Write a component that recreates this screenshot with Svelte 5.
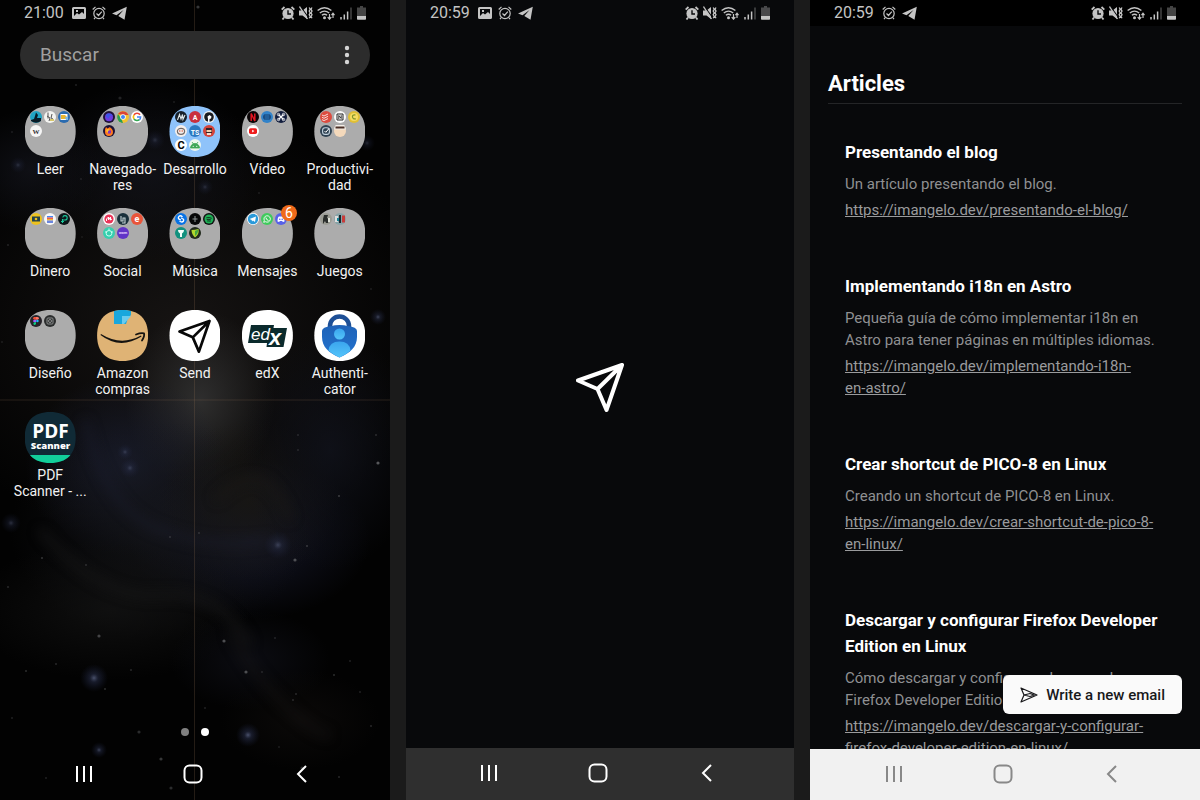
<script>
  const dot = (fill, art = '') => `<circle cx="6" cy="6" r="6" fill="${fill}"/>${art}`;
  const letter = (t, fill, size = 8, y = 9, extra = '') =>
    `<text x="6" y="${y}" font-size="${size}" font-weight="700" text-anchor="middle" fill="${fill}" ${extra}>${t}</text>`;

  const art = {
    kindle: dot('#20a5c4', '<path d="M6 1.500 8 4 7 7h4v3q-5 3.500-10 0V9l3-1 1-3z" fill="#091b26"/>'),
    sketch: dot('#f4f4f1', '<path d="M4 1.500v6M3 5l3 2-1 3M8 3l-1 4 2 1" stroke="#555" fill="none"/><path d="M6 8h4v2H6z" fill="#d8c76c"/>'),
    files: dot('#2a6bb0', '<path d="M2.500 3h7v6h-7z" fill="#fff"/><path d="M3 4h4l2 2v2H3z" fill="#e8b530"/><path d="M7 6h3v3H8z" fill="#79b6e8"/>'),
    wiki: dot('#f6f6f6', letter('W', '#333', 7, 8.5, 'font-family="Liberation Serif"')),
    foxNight: dot('#20123a', '<circle cx="6" cy="6.300" r="4" fill="#6e3be0"/><path d="M3 4c2-2 5-2 7 1-2-1-4 0-4 2 0 1-3 0-3-3z" fill="#3c55e8"/>'),
    chrome: dot('#f2c230', '<path d="M1 3A6 6 0 0 1 11.500 4H6z" fill="#db4437"/><path d="M1 3 4.500 8 6 12A6 6 0 0 1 1 3z" fill="#249d58"/><circle cx="6" cy="6" r="2.800" fill="#fff"/><circle cx="6" cy="6" r="2" fill="#4285f4"/>'),
    google: dot('#fff', '<path d="M9 3.800A3.600 3.600 0 0 0 3 4" stroke="#ea4335" stroke-width="1.600" fill="none"/><path d="M3 4a3.600 3.600 0 0 0 0 4" stroke="#fbbc05" stroke-width="1.600" fill="none"/><path d="M3 8a3.600 3.600 0 0 0 5.500.500" stroke="#34a853" stroke-width="1.600" fill="none"/><path d="M6 6h3.600q0 2-1.200 2.800" stroke="#4285f4" stroke-width="1.500" fill="none"/>'),
    firefox: dot('#1d1237', '<path d="M2 5c0-2 1-2 1-3l1.500 1.500L7 2c0 1 3 1.500 3 5a4 4 0 0 1-8 0z" fill="#ff7a20"/><circle cx="6.200" cy="6.800" r="2" fill="#8a35b8"/><path d="M3 5q2-2 4 0L5 6v2q-2-1-2-3z" fill="#ffc22e"/>'),
    mono: dot('#16202a', '<path d="M2.500 9 4.500 3.500 6 8l1.500-4.500L8 8.500 10 4" stroke="#dfe7ea" stroke-width="1.100" fill="none"/>'),
    angular: dot('#c9303e', letter('A', '#fff', 7, 8.5)),
    github: dot('#f1f2f2', '<circle cx="6" cy="6" r="4.800" fill="#181b20"/><path d="M4.500 5.500 6.500 4l2 1.500L8 7.500 6.500 8v3H5V8z" fill="#fff"/>'),
    bot: dot('#f3efed', '<ellipse cx="6" cy="6.300" rx="3.600" ry="3" fill="none" stroke="#736a68" stroke-width="1.200"/><circle cx="4.800" cy="6" r=".7" fill="#e44a2a"/><circle cx="7.200" cy="6" r=".7" fill="#e44a2a"/>'),
    ts: dot('#2b79c2', letter('TS', '#fff', 7, 9.5)),
    ninja: dot('#d3443b', '<path d="M3 3h6v5H3z" fill="#33242a"/><path d="M3.500 5h5v2h-5z" fill="#f5cda8"/><path d="M4 8h4v2H4z" fill="#f2dfcf"/>'),
    cee: dot('#fff', letter('C', '#050505', 11, 10)),
    android: dot('#eef8ed', '<path d="M1.500 9a4.500 4.500 0 0 1 9 0zM3 3l1.500 2M9 3 7.500 5" fill="#40a856" stroke="#40a856" stroke-width=".8"/><circle cx="4.200" cy="7.300" r=".6" fill="#fff"/><circle cx="7.800" cy="7.300" r=".6" fill="#fff"/>'),
    netflix: dot('#090506', '<path d="M4.200 10V2.500L7.800 10V2.500" stroke="#e31621" stroke-width="1.500" fill="none"/>'),
    play: dot('#3182c9', '<path d="M3 4h6v4H3zM2 6h8" stroke="#143c6d" fill="none"/>'),
    drone: dot('#121d3d', '<path d="m3.500 3.500 5 5m0-5-5 5" stroke="#fff" stroke-width="1.300"/><g fill="none" stroke="#fff" stroke-width=".8"><circle cx="3.500" cy="3.500" r="1.200"/><circle cx="8.500" cy="3.500" r="1.200"/><circle cx="3.500" cy="8.500" r="1.200"/><circle cx="8.500" cy="8.500" r="1.200"/></g>'),
    youtube: dot('#fff', '<rect x="2" y="3.300" width="8" height="5.600" rx="1.600" fill="#ee1c1c"/><path d="m5.200 4.800 2.200 1.300-2.200 1.300z" fill="#fff"/>'),
    todoist: dot('#dc4c40', '<path d="m2 4 2 1 4-2M2 6.300l2 1 4-2M2 8.600l2 1 4-2" stroke="#fbe9e6" stroke-width=".9" fill="none"/>'),
    notion: dot('#fafafa', '<path d="M3 3h6v6H3z" fill="none" stroke="#222"/><path d="M4.800 8V4.500l2.400 3V4.200" stroke="#222" fill="none" stroke-width=".9"/>'),
    coin: dot('#e0bf35', '<circle cx="6" cy="6" r="4" fill="#f4dc62"/><path d="M7.500 4Q4 3.500 4.500 6t3.300 1.800" stroke="#7f9329" fill="none" stroke-width="1.200"/>'),
    tick: dot('#2f4252', '<rect x="2.600" y="2.800" width="6.800" height="6.600" rx="2.500" fill="none" stroke="#c3d3df" stroke-width="1.100"/><path d="m4.500 6 1.300 1.300L9 3.500" stroke="#fff" fill="none"/>'),
    coffee: dot('#f4d9bb', '<path d="M0 4.500a6 6 0 0 1 12 0z" fill="#f2eee8"/><path d="M1.500 1.500h9v2h-9z" fill="#4b2f25"/>'),
    cash: dot('#edc21f', '<path d="M2 3.500h8v5H2z" fill="#24424b"/><circle cx="6" cy="6" r="1.300" fill="#edc21f"/>'),
    wallet: dot('#f8f8f8', '<path d="M3 3h6v1.600H3z" fill="#4285f4"/><path d="M3 4.500h6v1.600H3z" fill="#e9604e"/><path d="M3 6h6v1.500H3z" fill="#f2b632"/><path d="M3 7.500h6V10H3z" fill="#6a86df"/>'),
    pay: dot('#0c1518', '<path d="M4.500 10V6M4 7h3a2.200 2.200 0 1 0-2.200-2.500M3 8.500h3" stroke="#19c79a" stroke-width="1.100" fill="none"/>'),
    music: dot('#fff', '<circle cx="6" cy="6" r="4.600" fill="#ea3358"/><path d="M3.500 8V6l2-2v3l2-3v3l1.500-1" stroke="#fff" fill="none"/>'),
    goodreads: dot('#1a303b', '<path d="M4 3v5h2V5h2v5H5" stroke="#c8d5d8" fill="none" stroke-width="1.100"/>'),
    ember: dot('#e9553a', letter('e', '#fff', 9, 8.8)),
    turtle: dot('#37cfae', '<circle cx="6" cy="6.300" r="2.800" fill="none" stroke="#c8fff2"/><path d="M6 1.500v2M2 5h2m6 0H8" stroke="#c8fff2"/>'),
    chat: dot('#6133c7', letter('wom', '#e1cfff', 4, 7.3)),
    shazam: dot('#0872e5', '<path d="M7.500 4Q5 1.500 3.500 4q-1 2 2.500 3M4.500 8Q7 10 8.500 8q1-2-2.500-3" stroke="#fff" fill="none" stroke-width="1.300"/>'),
    tune: dot('#070808', '<path d="M6 3v6M3.500 6h5" stroke="#8f9696"/>'),
    spotify: dot('#101413', '<circle cx="6" cy="6" r="4.500" fill="#1daf55"/><path d="M3.300 4.800Q6 4 8.700 5.300M3.700 6.500Q6 6 8 7M4.200 8Q6 7.600 7.500 8.300" stroke="#101413" fill="none" stroke-width=".8"/>'),
    karaoke: dot('#11917e', '<path d="M3 3h6q0 3-2 3.500V10H5V6.500Q3 6 3 3z" fill="#f2fffb"/>'),
    leaf: dot('#20291c', '<path d="M2.500 3q3.500 0 7-1 1 5.500-3.500 8.500-3.500-3.500-3.500-7.500z" fill="#b1d72c"/><path d="M6 9V4l3-1.500q.5 3.500-3 6.500z" fill="#46a840"/>'),
    telegram: dot('#fff', '<circle cx="6" cy="6" r="5.200" fill="#2999d9"/><path d="m2.500 6 6.500-2.600L8 9 6 7.600 5 8.500 4.700 7z" fill="#fff"/>'),
    whatsapp: dot('#3ecb5c', '<path d="m2.700 9.300.6-1.900a3.200 3.200 0 1 1 1.200 1.300z" fill="none" stroke="#fff" stroke-width=".9"/><path d="M4.800 4.500q.5 2.500 2.700 3" stroke="#fff" fill="none"/>'),
    discord: dot('#5761e8', '<path d="M2.500 8.500Q2.500 4 4 3.500h4q1.500.500 1.500 5L8 9l-1-1H5L4 9z" fill="#fff"/><circle cx="4.800" cy="6.300" r=".8" fill="#5761e8"/><circle cx="7.200" cy="6.300" r=".8" fill="#5761e8"/>'),
    chess: dot('#9b9c94', '<path d="M4 2h4L7 5l2 1-1 4H6L5 8 3 11V6z" fill="#292d2b"/><path d="M8 5h2v4H8z" fill="#e0e3da"/>'),
    tactics: dot('#88a4a8', '<path d="M1 3h3v6H1z" fill="#ddd"/><path d="M5 2h2v8H5z" fill="#17252e"/><path d="M8 2.500h3v7H8z" fill="#c93b39"/><path d="M3 5h2v3H3z" fill="#178397"/>'),
    figma: dot('#262329', '<path d="M6 2v2.700H4.500a1.300 1.300 0 1 1 0-2.700z" fill="#f25032"/><path d="M6 2h1.500a1.300 1.300 0 0 1 0 2.700H6z" fill="#ff7262"/><path d="M6 4.700v2.600H4.500a1.300 1.300 0 1 1 0-2.600z" fill="#a259ff"/><circle cx="7.400" cy="6" r="1.300" fill="#1abcfe"/><path d="M6 7.300v1.500a1.300 1.300 0 1 1-1.500-1.500z" fill="#0acf83"/>'),
    camera: dot('#2b2d2d', '<rect x="3" y="3" width="6" height="6" rx="1" fill="none" stroke="#8b8d8d"/><circle cx="6" cy="6" r="1.500" fill="none" stroke="#8b8d8d"/>')
  };

  const apps = [
    { name: 'Leer', minis: ['kindle', 'sketch', 'files', 'wiki'] },
    { name: 'Navegado-\nres', minis: ['foxNight', 'chrome', 'google', 'firefox'] },
    { name: 'Desarrollo', blue: true, minis: ['mono', 'angular', 'github', 'bot', 'ts', 'ninja', 'cee', 'android'] },
    { name: 'Vídeo', minis: ['netflix', 'play', 'drone', 'youtube'] },
    { name: 'Productivi-\ndad', minis: ['todoist', 'notion', 'coin', 'tick', 'coffee'] },
    { name: 'Dinero', minis: ['cash', 'wallet', 'pay'] },
    { name: 'Social', minis: ['music', 'goodreads', 'ember', 'turtle', 'chat'] },
    { name: 'Música', minis: ['shazam', 'tune', 'spotify', 'karaoke', 'leaf'] },
    { name: 'Mensajes', badge: 6, minis: ['telegram', 'whatsapp', 'discord'] },
    { name: 'Juegos', minis: ['chess', 'tactics'] },
    { name: 'Diseño', minis: ['figma', 'camera'] },
    { name: 'Amazon\ncompras', icon: 'amazon' },
    { name: 'Send', icon: 'send' },
    { name: 'edX', icon: 'edx' },
    { name: 'Authenti-\ncator', icon: 'auth' },
    { name: 'PDF\nScanner - ...', icon: 'pdf' }
  ];

  // x, y, rx, ry, colour
  const clouds = [
    [180, 330, 260, 220, '#1b1817'], [200, 400, 75, 90, '#363636'], [125, 465, 100, 90, '#1c2033'],
    [250, 540, 120, 80, '#181b30'], [160, 530, 150, 110, '#16171c'], [250, 500, 90, 80, '#191713'],
    [110, 610, 140, 70, '#121212'], [250, 660, 80, 50, '#0e0f16'], [330, 450, 90, 120, '#11131c'],
    [150, 170, 110, 90, '#12131a'], [30, 170, 70, 60, '#12131a'], [300, 720, 80, 50, '#0d0b0a']
  ];

  // x, y, radius, brightness
  const stars = [
    [198, 7, 2, 0.5], [120, 98, 2, 0.3], [155, 140, 5, 0.3], [18, 165, 4, 0.3], [40, 126, 1, 0.3], [81, 179, 1, 0.4],
    [12, 132, 1, 0.4], [174, 102, 1, 0.4], [367, 143, 4, 0.3], [205, 187, 4, 0.3], [259, 193, 1, 0.4], [76, 85, 1, 0.5],
    [8, 245, 1, 0.5], [82, 237, 1, 0.3], [371, 289, 1, 0.4], [378, 317, 4, 0.5], [2, 342, 1, 0.4], [298, 435, 1, 0.5],
    [298, 450, 1, 0.5], [378, 463, 2, 0.8], [376, 435, 1, 0.6], [339, 496, 1, 0.9], [125, 452, 4, 0.35], [130, 468, 5, 0.35],
    [11, 523, 5, 0.35], [278, 545, 7, 0.4], [307, 546, 1, 0.8], [295, 560, 2, 0.7], [42, 558, 1, 0.8], [86, 565, 1, 0.6],
    [8, 587, 1, 0.6], [170, 537, 1, 0.6], [199, 533, 1, 0.6], [99, 636, 2, 0.6], [224, 641, 2, 0.7], [94, 678, 7, 0.6],
    [105, 689, 1, 0.7], [26, 671, 1, 0.7], [56, 664, 1, 0.6], [131, 670, 1, 0.6], [246, 672, 2, 0.7], [262, 672, 1, 0.5],
    [334, 675, 1, 0.7], [296, 694, 1, 0.6], [293, 700, 1, 0.6], [360, 692, 1, 0.5], [205, 708, 1, 0.5], [248, 735, 6, 0.6],
    [139, 732, 2, 0.4], [99, 750, 4, 0.5], [161, 759, 2, 0.5], [302, 768, 2, 0.4], [279, 747, 1, 0.4], [171, 788, 2, 0.4],
    [46, 778, 1, 0.5], [12, 718, 1, 0.5], [371, 726, 1, 0.6], [339, 777, 1, 0.6], [350, 661, 1, 0.5], [275, 638, 1, 0.5]
  ];

  // The word joiner keeps "en-astro" on one line.
  const articles = [
    { title: 'Presentando el blog', text: 'Un artículo presentando el blog.', url: 'https://imangelo.dev/presentando-el-blog/' },
    { title: 'Implementando i18n en Astro', text: 'Pequeña guía de cómo implementar i18n en Astro para tener páginas en múltiples idiomas.', url: 'https://imangelo.dev/implementando-i18n-en-\u2060astro/' },
    { title: 'Crear shortcut de PICO-8 en Linux', text: 'Creando un shortcut de PICO-8 en Linux.', url: 'https://imangelo.dev/crear-shortcut-de-pico-8-en-linux/' },
    { title: 'Descargar y configurar Firefox Developer Edition en Linux', text: 'Cómo descargar y configurar el navegador Firefox Developer Edition en Linux.', url: 'https://imangelo.dev/descargar-y-configurar-firefox-developer-edition-en-linux/' }
  ];
</script>

{#snippet plane(cls)}
  <svg class={cls} viewBox="0 0 48 50" fill="none" stroke="currentColor" stroke-width="4" stroke-linejoin="round" stroke-linecap="round" aria-hidden="true">
    <path d="M46 3 2 18.500 21.500 27 30.500 48zL21.500 27" />
  </svg>
{/snippet}

{#snippet status(time, picture)}
  <header class="status">
    <div class="side">
      <time>{time}</time>
      {#if picture}
        <svg width="14" height="14" viewBox="0 0 14 14" aria-hidden="true">
          <path fill="currentColor" fill-rule="evenodd" d="M1.500 1h11A1.500 1.500 0 0 1 14 2.500v9a1.500 1.500 0 0 1-1.500 1.500h-11A1.500 1.500 0 0 1 0 11.500v-9A1.500 1.500 0 0 1 1.500 1zM2 3v7l3-3 2 1.500L10 6l2 2V3zM4 4h2v2H4z" />
        </svg>
      {/if}
      <svg width="14" height="14" viewBox="0 0 14 14" fill="none" stroke="currentColor" stroke-width="1.200" aria-hidden="true">
        <circle cx="7" cy="7.500" r="5.200" /><path d="m4.500 7.500 2 2 3.300-3.800M.7 3.500 3.500.9M13.300 3.500 10.500.9M3.300 11.500 2 13.200M10.700 11.500l1.300 1.700" />
      </svg>
      <svg width="15" height="14" viewBox="0 0 15 14" fill="currentColor" aria-hidden="true">
        <path d="M14.800.8 0 7.500l4.500 1.800L11.500 4 6.300 10l6.200 3.800z" />
      </svg>
    </div>
    <div class="side tight">
      <svg width="14" height="14" viewBox="0 0 14 14" aria-hidden="true">
        <circle cx="7" cy="7.500" r="5.600" fill="currentColor" /><path d="M.7 3.700 3.500 1M13.300 3.700 10.500 1M3 11.500l-1.500 2M11 11.500l1.500 2" stroke="currentColor" stroke-width="1.800" /><path d="M7 4.300V8h3" stroke="#08090b" stroke-width="1.400" fill="none" />
      </svg>
      <svg width="14" height="14" viewBox="0 0 14 14" fill="none" stroke="currentColor" aria-hidden="true">
        <path d="M0 4.500h3.500L8 1v12L3.500 9.500H0z" fill="currentColor" stroke="none" /><path d="m1.500.5 8 11" stroke="#08090b" stroke-width="1.100" /><path d="m.5.5 8 12.500" stroke-width="1.300" /><path d="m10.200 1.500 1 1.800-1 1.800 1 1.800-1 1.800 1 1.800-1 1.800M13 1.500l-1 1.800 1 1.800-1 1.800 1 1.800-1 1.800 1 1.800" stroke-width="1.300" />
      </svg>
      <svg width="18" height="14" viewBox="0 0 18 14" fill="none" stroke="currentColor" stroke-width="1.400" aria-hidden="true">
        <path d="M.6 4.500Q7.500-1 14.400 4.500M2.800 7Q7.500 3.300 12.200 7M4.900 9.300q2.600-2 5.200 0" /><circle cx="7.500" cy="11.700" r="1.500" fill="currentColor" stroke="none" /><path d="M12.500 8v5m-1.800-1.800 1.800 2 1.800-2M16 12V7.500m-1.500 1.700L16 7.300l1.500 1.900" stroke-width="1.200" />
      </svg>
      <svg width="14" height="14" viewBox="0 0 14 14" stroke="currentColor" stroke-width="1.500" aria-hidden="true">
        <path d="M2 11v2.500M5.300 8.500v5M8.600 5.500v8" /><path d="M12 1.500v12" opacity=".35" />
      </svg>
      <svg width="9" height="14" viewBox="0 0 9 14" fill="currentColor" aria-hidden="true">
        <path d="M3 0h3v1.500h3V10H0V1.500h3z" opacity=".35" /><path d="M0 10h9v3a.8.8 0 0 1-.8.800H.8A.8.8 0 0 1 0 13z" />
      </svg>
    </div>
  </header>
{/snippet}

{#snippet keys(tone)}
  <nav class="keys {tone}" aria-label="System">
    <button aria-label="Recents"><svg width="20" height="20" viewBox="0 0 20 20" fill="none" stroke="currentColor" stroke-width="2"><path d="M3 2v16M10 2v16M17 2v16" /></svg></button>
    <button aria-label="Home"><svg width="20" height="20" viewBox="0 0 20 20" fill="none" stroke="currentColor" stroke-width="2"><rect x="1.500" y="1.500" width="17" height="17" rx="5" /></svg></button>
    <button aria-label="Back"><svg width="20" height="20" viewBox="0 0 20 20" fill="none" stroke="currentColor" stroke-width="2"><path d="M14 2 6 10l8 8" /></svg></button>
  </nav>
{/snippet}

<div class="board">
  <section class="phone home">
    <svg class="sky" viewBox="0 0 390 800" preserveAspectRatio="xMidYMid slice" aria-hidden="true">
      <defs>
        {#each clouds as c, i}
          <radialGradient id="cloud{i}"><stop offset="0" stop-color={c[4]} stop-opacity=".8" /><stop offset=".5" stop-color={c[4]} stop-opacity=".4" /><stop offset="1" stop-color={c[4]} stop-opacity="0" /></radialGradient>
        {/each}
        <filter id="soft" x="-20%" y="-20%" width="140%" height="140%" color-interpolation-filters="sRGB"><feGaussianBlur stdDeviation="6" /></filter>
        <radialGradient id="blue"><stop offset="0" stop-color="#7884b0" /><stop offset=".3" stop-color="#343d62" stop-opacity=".7" /><stop offset="1" stop-color="#20284a" stop-opacity="0" /></radialGradient>
      </defs>
      <rect width="390" height="800" fill="#020202" />
      {#each clouds as [x, y, rx, ry], i}
        <ellipse cx={x} cy={y} {rx} {ry} fill="url(#cloud{i})" />
      {/each}
      <g filter="url(#soft)" fill="none" stroke-width="7" stroke-opacity=".6">
        <path d="M85 420q20 90 75 110t110 10" stroke="#1a1d2b" />
        <path d="M40 530q60 70 120 65t90 50" stroke="#1a1a1a" />
        <path d="M215 500q50-50 75 20" stroke="#1c1b18" />
        <path d="M230 630q15 35 50 70t50 35" stroke="#151414" />
      </g>
      {#each stars as [x, y, r, o]}
        {#if r > 3}
          <circle cx={x} cy={y} r={r * 2} fill="url(#blue)" opacity={o} />
        {:else}
          <circle cx={x} cy={y} r={r * 0.8} fill="#6a6b6e" opacity={o} />
        {/if}
      {/each}
      <path d="M194.500 0v800" stroke="#8a6a50" stroke-opacity=".25" />
      <path d="M0 400h390" stroke="#8a6a50" stroke-opacity=".12" stroke-width="2" />
    </svg>
    {@render status('21:00', true)}
    <div class="search">
      <input type="search" placeholder="Buscar" aria-label="Buscar" />
      <button aria-label="Más opciones"><svg width="6" height="20" viewBox="0 0 6 20" fill="currentColor"><circle cx="3" cy="3" r="2.200" /><circle cx="3" cy="10" r="2.200" /><circle cx="3" cy="17" r="2.200" /></svg></button>
    </div>
    <div class="apps">
      {#each apps as app}
        <button class="app">
          <span class="holder">
            {#if app.minis}
              <span class="tile folder" class:azure={app.blue}>
                {#each app.minis as m}
                  <svg width="12" height="12" viewBox="0 0 12 12" aria-hidden="true">{@html art[m]}</svg>
                {/each}
              </span>
            {:else if app.icon === 'amazon'}
              <svg class="tile" viewBox="0 0 51 51" aria-hidden="true">
                <rect width="51" height="51" fill="#dfb375" />
                <path d="M17 0h17v5l-3 3-2 6H17z" fill="#19a7dd" /><path d="M25 6h9l-7 8h-2z" fill="#6acbee" />
                <path d="M4 24q20 12.500 40 1.500l.5 1Q23 40 3.500 25z" fill="#151310" />
                <path d="M39 24.500q5-2 8-1.200.8 3-2 7.200" fill="none" stroke="#151310" stroke-width="1.800" stroke-linecap="round" stroke-linejoin="round" />
              </svg>
            {:else if app.icon === 'send'}
              <span class="tile white">{@render plane('plane-small')}</span>
            {:else if app.icon === 'edx'}
              <svg class="tile" viewBox="0 0 51 51" aria-hidden="true">
                <rect width="51" height="51" fill="#fff" />
                <path d="M9 15h23l-.5 3H45l-3.500 19H24.500l.5-4H6z" fill="#0b2a2c" />
                <text class="plain" x="9" y="30" font-size="17" font-style="italic" fill="#fff">ed</text>
                <text class="plain" x="27" y="35" font-size="22" font-weight="700" font-style="italic" fill="#fff">x</text>
              </svg>
            {:else if app.icon === 'auth'}
              <svg class="tile" viewBox="0 0 51 51" aria-hidden="true">
                <defs>
                  <linearGradient id="shield" x2="0" y2="1"><stop stop-color="#1f63b8" /><stop offset="1" stop-color="#2273cf" /></linearGradient>
                  <linearGradient id="person" x2="0" y2="1"><stop stop-color="#3aa5ee" /><stop offset="1" stop-color="#55c5fa" /></linearGradient>
                </defs>
                <rect width="51" height="51" fill="#fff" />
                <path d="M16 17v-1a9.500 9.500 0 0 1 19 0v1" stroke="#1d4f96" stroke-width="4.500" fill="none" />
                <path d="M25.500 15q5 0 8 1 9.500 1 9.500 5v6c0 10-7 16-17.500 20.500C15 43 8 37 8 27v-6q0-4 9.500-5 3-1 8-1z" fill="url(#shield)" />
                <circle cx="25.500" cy="24" r="5.500" fill="url(#person)" />
                <path d="M14.500 40.500q1-9 11-9t11 9q-4 4-11 7-7-3-11-7z" fill="url(#person)" />
              </svg>
            {:else}
              <svg class="tile" viewBox="0 0 51 51" aria-hidden="true">
                <rect width="51" height="51" fill="#102a36" /><rect y="43" width="51" height="8" fill="#12cf9b" />
                <text class="open" x="25.500" y="26" font-size="19" font-weight="700" text-anchor="middle" fill="#fff">PDF</text>
                <text class="open" x="25.500" y="37" font-size="9.500" font-weight="800" text-anchor="middle" fill="#fff">Scanner</text>
              </svg>
            {/if}
            {#if app.badge}<span class="badge">{app.badge}</span>{/if}
          </span>
          <span class="label">{app.name}</span>
        </button>
      {/each}
    </div>
    <div class="pages"><span></span><span class="on"></span></div>
    {@render keys('clear')}
  </section>

  <section class="phone splash">
    {@render status('20:59', true)}
    <main>{@render plane('plane-large')}</main>
    {@render keys('dark')}
  </section>

  <section class="phone reader">
    {@render status('20:59', false)}
    <div class="view">
      <h1>Articles</h1>
      <div class="list">
        {#each articles as a}
          <article>
            <h2>{a.title}</h2>
            <p>{a.text}</p>
            <a href={a.url.replace('\u2060', '')}>{a.url}</a>
          </article>
        {/each}
      </div>
      <button class="compose">
        <svg width="18" height="16" viewBox="0 0 18 16" fill="none" stroke="currentColor" stroke-width="1.200" stroke-linejoin="round" aria-hidden="true"><path d="M1 1 17 8 1 15l3-7zM4 8l6-1.500L14 8l-4 1.500z" /></svg>
        Write a new email
      </button>
    </div>
    {@render keys('light')}
  </section>
</div>

<style>
  :global(body) { margin: 0; background: #1b1b1b; }
  .board {
    display: grid;
    grid-template-columns: minmax(0, 195fr) minmax(0, 194fr) minmax(0, 195fr);
    gap: 16px;
    height: 100vh;
    font-family: Roboto, sans-serif;
    background: #1b1b1b;
  }
  button { font: inherit; color: inherit; background: none; border: 0; padding: 0; cursor: pointer; }
  svg { display: block; flex: none; }
  .phone { position: relative; display: flex; flex-direction: column; overflow: hidden; background: #08090b; color: #fff; }
  .home { isolation: isolate; }
  .sky { position: absolute; inset: 0; z-index: -1; width: 100%; height: 100%; }

  .status { display: flex; justify-content: space-between; align-items: center; flex: none; height: 26px; padding: 0 24px; color: #c4c4c4; }
  .side { display: flex; align-items: center; gap: 6px; }
  .tight { gap: 4px; }
  time { font-size: 16px; line-height: 26px; margin-right: 2px; }

  .search { display: flex; align-items: center; height: 48px; margin: 5px 20px 0 20px; padding: 0 20px; border-radius: 24px; background: #2c2c2c; flex: none; box-sizing: border-box; }
  .search input { flex: 1; min-width: 0; border: 0; padding: 0; outline: 0; background: none; font: 19px/24px Roboto, sans-serif; color: #fff; }
  .search input::placeholder { color: #a0a0a0; opacity: 1; }
  .search button { color: #d6d6d6; }

  .apps { display: grid; grid-template-columns: repeat(5, minmax(0, 1fr)); grid-auto-rows: 102px; padding: 27px 14px 0; flex: 1; align-content: start; }
  .app { display: flex; flex-direction: column; align-items: center; gap: 4px; }
  .holder { position: relative; }
  .tile {
    display: block;
    box-sizing: border-box;
    width: 51px;
    height: 51px;
    clip-path: path('M0 25.5C0 9 9 0 25.5 0S51 9 51 25.5 42 51 25.5 51 0 42 0 25.5');
  }
  .folder { display: grid; grid-template-columns: repeat(3, 12px); grid-auto-rows: 12px; gap: 2px; padding: 5px; background: #acacac; justify-content: center; align-content: start; }
  .azure { background: #8fc3fa; }
  .white { background: #fff; color: #080808; display: grid; place-items: center; }
  .home :global(.plane-small) { width: 33px; height: 34px; }
  .open { font-family: "Open Sans", sans-serif; }
  .plain { font-family: "Liberation Sans", sans-serif; }
  .badge { position: absolute; top: -3px; right: -4px; width: 16px; height: 16px; border-radius: 8px; background: #f06a1a; font-size: 14px; line-height: 16px; text-align: center; }
  .label { font-size: 14px; line-height: 16px; white-space: pre; text-align: center; color: #f2f2f2; }

  .pages { display: flex; justify-content: center; gap: 12px; padding-bottom: 12px; }
  .pages span { width: 8px; height: 8px; border-radius: 4px; background: #808080; }
  .pages .on { background: #fff; }

  .keys { display: grid; grid-template-columns: repeat(3, 1fr); align-items: center; flex: none; box-sizing: border-box; height: 52px; padding: 0 33px 0 29px; }
  .keys button { display: grid; place-items: center; height: 100%; }
  .dark { background: #2f2f2f; padding-bottom: 2px; }
  .light { background: #f1f1f1; color: #888; height: 51px; padding-bottom: 1px; }

  .splash main { flex: 1; display: grid; place-items: center; }
  .splash :global(.plane-large) { width: 48px; height: 50px; }

  .reader .status { background: #000; }
  .view { position: relative; flex: 1; min-height: 0; overflow: hidden; padding: 0 18px; }
  h1 { margin: 41px 0 0; padding-bottom: 3px; font-size: 22px; line-height: 33px; font-weight: 700; border-bottom: 1px solid #242527; }
  .list { display: flex; flex-direction: column; gap: 52px; padding: 35px 17px 52px; }
  h2 { margin: 0 0 8px; font-size: 17px; line-height: 26px; font-weight: 700; }
  p { margin: 0 0 4px; font-size: 15px; line-height: 22px; color: #8f9092; }
  article a { display: block; font-size: 15px; line-height: 22px; color: #9a9b9d; }
  .compose { position: absolute; right: 18px; bottom: 35px; display: flex; align-items: center; gap: 8px; height: 39px; padding: 0 17px; border-radius: 6px; background: #fafafa; color: #18181b; font-size: 15px; font-weight: 500; white-space: nowrap; }
</style>
